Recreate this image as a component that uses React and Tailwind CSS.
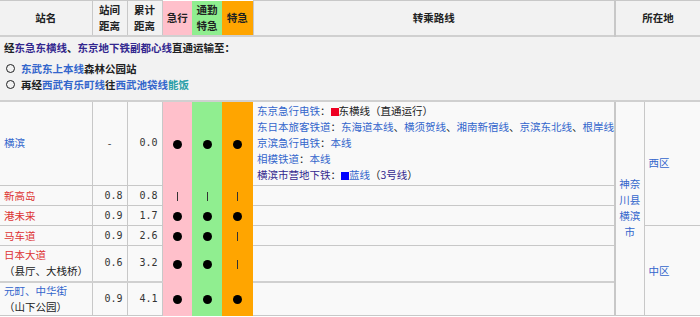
const blue = 'text-[#3366cc]';
const red = 'text-[#d33]';
const dark = 'text-[#33288f]';

const Dot = () => <span className="inline-block w-[9px] h-[9px] rounded-full bg-black align-middle" />;
const Pass = () => <span className="inline-block w-px h-[9px] bg-[#333] align-middle" />;
const Ring = () => <span className="inline-block w-[9px] h-[9px] rounded-full border-[1.5px] border-[#202122] shrink-0" />;

const stopCell = (v, bg) => (
  <td className={`${bg} border-0 text-center p-0`}>{v === 'o' ? <Dot /> : <Pass />}</td>
);

const Stops = ({ s }) => (
  <>
    {stopCell(s[0], 'bg-[#ffc0cb]')}
    {stopCell(s[1], 'bg-[#90ee90]')}
    {stopCell(s[2], 'bg-[#ffa500]')}
  </>
);

const num = 'border border-[#c8c8c8] text-right pr-1 font-["DejaVu_Sans_Mono",monospace] text-[10px] text-[#333]';
const cell = 'border border-[#c8c8c8] px-1';

export default function App() {
  return (
    <div className="w-[700px] h-[317px] overflow-hidden bg-white font-['Noto_Sans_CJK_SC','Noto_Sans',sans-serif] text-[10.5px] leading-4 text-[#202122]">
      <table className="w-[700px] table-fixed border-collapse">
        <colgroup>
          <col className="w-[92px]" />
          <col className="w-[35px]" />
          <col className="w-[35px]" />
          <col className="w-[30px]" />
          <col className="w-[30px]" />
          <col className="w-[31px]" />
          <col className="w-[362px]" />
          <col className="w-[29px]" />
          <col className="w-[56px]" />
        </colgroup>
        <thead>
          <tr className="h-[35px] bg-[#f2f2f2] font-bold text-center">
            <th className="border border-[#c8c8c8] border-l-0">站名</th>
            <th className="border border-[#c8c8c8]">站间<br />距离</th>
            <th className="border border-[#c8c8c8]">累计<br />距离</th>
            <th className="bg-[#ffc0cb] border-0">急行</th>
            <th className="bg-[#90ee90] border-0">通勤<br />特急</th>
            <th className="bg-[#ffa500] border-0">特急</th>
            <th className="border border-[#c8c8c8] border-r-2">转乘路线</th>
            <th colSpan={2} className="border border-[#c8c8c8] border-r-0">所在地</th>
          </tr>
        </thead>
        <tbody>
          <tr className="h-[64px] bg-[#f2f2f2]">
            <td colSpan={9} className="border-y-2 border-[#d0d0d0] px-1 pt-[3px] pb-[7px] align-top font-bold">
              <div>
                经<span className={dark}>东急东横线</span>、<span className={dark}>东京地下铁副都心线</span>直通运输至：
              </div>
              <div className="mt-[5px] flex items-center gap-[6px] pl-[2px]">
                <Ring />
                <span><span className={blue}>东武东上本线</span>森林公园站</span>
              </div>
              <div className="flex items-center gap-[6px] pl-[2px]">
                <Ring />
                <span>
                  再经<span className={blue}>西武有乐町线</span>往<span className={blue}>西武池袋线</span>
                  <span className="text-[#2a9fa8]">能饭</span>
                </span>
              </div>
            </td>
          </tr>

          <tr className="h-[85px] bg-[#f9f9f9]">
            <td className={`${cell} border-l-0 ${blue}`}>横滨</td>
            <td className="border border-[#c8c8c8] text-center text-[#333]">-</td>
            <td className={num}>0.0</td>
            <Stops s="ooo" />
            <td className="border border-[#c8c8c8] border-l-0 border-r-2 px-1 py-[1px] whitespace-nowrap">
              <div>
                <span className={blue}>东京急行电铁</span>：
                <span className="inline-block w-[8px] h-[8px] bg-[#ee0022] align-[-1px]" />东横线（直通运行）
              </div>
              <div>
                <span className={blue}>东日本旅客铁道</span>：<span className={blue}>东海道本线</span>、
                <span className={blue}>横须贺线</span>、<span className={blue}>湘南新宿线</span>、
                <span className={blue}>京滨东北线</span>、<span className={blue}>根岸线</span>
              </div>
              <div>
                <span className={blue}>京滨急行电铁</span>：<span className={blue}>本线</span>
              </div>
              <div>
                <span className={blue}>相模铁道</span>：<span className={blue}>本线</span>
              </div>
              <div>
                <span className={dark}>横滨市营地下铁</span>：
                <span className="inline-block w-[8px] h-[8px] bg-[#0000ff] align-[-1px]" />
                <span className={blue}>蓝线</span>（<span className={dark}>3号线</span>）
              </div>
            </td>
            <td rowSpan={6} className={`border border-[#c8c8c8] border-l-2 text-center px-[2px] ${blue}`}>
              神奈川县横滨市
            </td>
            <td rowSpan={3} className={`border border-[#c8c8c8] border-r-0 px-1 ${blue}`}>西区</td>
          </tr>

          <tr className="h-[20px] bg-[#f9f9f9]">
            <td className={`${cell} border-l-0 ${red}`}>新高岛</td>
            <td className={num}>0.8</td>
            <td className={num}>0.8</td>
            <Stops s="|||" />
            <td className="border border-[#c8c8c8] border-l-0 border-r-2" />
          </tr>

          <tr className="h-[20px] bg-[#f9f9f9]">
            <td className={`${cell} border-l-0 ${red}`}>港未来</td>
            <td className={num}>0.9</td>
            <td className={num}>1.7</td>
            <Stops s="ooo" />
            <td className="border border-[#c8c8c8] border-l-0 border-r-2" />
          </tr>

          <tr className="h-[20px] bg-[#f9f9f9]">
            <td className={`${cell} border-l-0 ${red}`}>马车道</td>
            <td className={num}>0.9</td>
            <td className={num}>2.6</td>
            <Stops s="oo|" />
            <td className="border border-[#c8c8c8] border-l-0 border-r-2" />
            <td rowSpan={3} className={`border border-[#c8c8c8] border-r-0 px-1 ${blue}`}>中区</td>
          </tr>

          <tr className="h-[36px] bg-[#f9f9f9]">
            <td className={`${cell} border-l-0 border-b-2 border-b-[#d0d0d0]`}>
              <div className={red}>日本大道</div>
              <div>（县厅、大栈桥）</div>
            </td>
            <td className={`${num} border-b-2 border-b-[#d0d0d0]`}>0.6</td>
            <td className={`${num} border-b-2 border-b-[#d0d0d0]`}>3.2</td>
            <Stops s="oo|" />
            <td className="border border-[#c8c8c8] border-l-0 border-r-2 border-b-2 border-b-[#d0d0d0]" />
          </tr>

          <tr className="h-[34px] bg-[#f9f9f9]">
            <td className={`${cell} border-l-0`}>
              <div className={blue}>元町、中华街</div>
              <div>（山下公园）</div>
            </td>
            <td className={num}>0.9</td>
            <td className={num}>4.1</td>
            <Stops s="ooo" />
            <td className="border border-[#c8c8c8] border-l-0 border-r-2" />
          </tr>
        </tbody>
      </table>
    </div>
  );
}
